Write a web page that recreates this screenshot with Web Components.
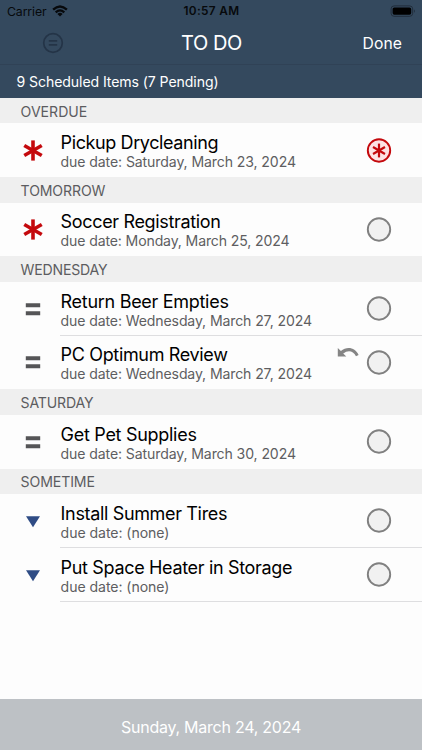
<!DOCTYPE html>
<html lang="en"><head><meta charset="utf-8"><title>To Do</title>
<style>html,body{margin:0;height:100%}body{font-family:Inter,"Liberation Sans",sans-serif;overflow:hidden}</style></head>
<body><todo-app></todo-app>
<script>
// A single line of text tracked to a given width.
class FitText extends HTMLElement{
  connectedCallback(){
    const r=this.attachShadow({mode:'open'});
    r.innerHTML='<style>:host{display:block;white-space:nowrap}span{display:inline-block}</style><span></span>';
    const s=r.querySelector('span'),t=this.getAttribute('text');s.textContent=t;
    const d=+this.getAttribute('width')-s.getBoundingClientRect().width;
    s.style.letterSpacing=(d/t.length).toFixed(4)+'px';
  }
}
customElements.define('fit-text',FitText);

const star=(r,w,c)=>`<g stroke="${c}" stroke-width="${w}"><path d="M0 ${-r}V${r}"/><path d="M0 ${-r}V${r}" transform="rotate(60)"/><path d="M0 ${-r}V${r}" transform="rotate(-60)"/></g>`;
const icons={
  high:star(10.1,3.6,'#c4090d'),
  normal:'<path d="M-7.2-6.3h14.4v4.1h-14.4zM-7.2 1.7h14.4v4.1h-14.4z" fill="#555557"/>',
  low:'<path d="M-7-5.3H7L0 5.8z" fill="#2f4c85"/>',
  open:'<circle r="11.2" fill="#f1f1f1" stroke="#808080" stroke-width="1.9"/>',
  alert:'<circle r="11.2" fill="#fde2e4" stroke="#c4090d" stroke-width="1.9"/>'+star(6.9,2.2,'#c4090d'),
  undo:'<path d="M-10.2-4.6V3.9H-1.7L-4.8 1.1C-.5-2.6 5-2.3 8 3.7L10.6 2.4C7.2-5.2-1.2-6.8-7.1-1.4z" fill="#858585"/>'
};
class TodoIcon extends HTMLElement{
  connectedCallback(){
    this.attachShadow({mode:'open'}).innerHTML=`<style>:host{display:block;width:28px;height:28px}svg{display:block}</style><svg width="28" height="28" viewBox="-14 -14.5 28 28">${icons[this.getAttribute('name')]}</svg>`;
  }
}
customElements.define('todo-icon',TodoIcon);

class StatusBar extends HTMLElement{
  connectedCallback(){
    this.attachShadow({mode:'open'}).innerHTML=`<style>
    :host{display:grid;grid-template-columns:1fr auto 1fr;height:22px;align-items:center;color:#07090c;padding:0 6px 0 7px;box-sizing:border-box}
    .l{display:flex;gap:5px;align-items:center;font-size:12.3px}.c{font-size:11.8px;font-weight:600}.r{justify-self:end}svg{display:block}.l svg{margin-top:-1px}</style>
    <div class="l"><fit-text text="Carrier" width="39.5"></fit-text>
    <svg width="16" height="12" viewBox="0 0 16 12"><g fill="none" stroke="#07090c" stroke-width="2.3"><path d="M1.1 4.7Q8-1.7 14.9 4.7M3.7 7.3Q8 3.4 12.3 7.3"/></g><path d="M5.4 8.9Q8 6.7 10.6 8.9L8 11.5z" fill="#07090c"/></svg></div>
    <fit-text class="c" text="10:57 AM" width="56"></fit-text>
    <svg class="r" width="26" height="13" viewBox="0 0 26 13"><rect x="1.1" y=".9" width="21.6" height="10.4" rx="3" fill="none" stroke="#212d3b"/><rect x="2.6" y="2.4" width="18.6" height="7.4" rx="1.7"/><path d="M24 4.3q1.5 1.8 0 3.6z" fill="#1a2430"/></svg>`;
  }
}
customElements.define('status-bar',StatusBar);

class NavBar extends HTMLElement{
  connectedCallback(){
    this.attachShadow({mode:'open'}).innerHTML=`<style>
    :host{display:grid;grid-template-columns:1fr auto 1fr;height:43px;align-items:center;color:#fff;padding:0 20px 0 42px;box-sizing:border-box;border-bottom:1px solid #304256}
    svg{display:block}.t{font-size:20px;margin-right:21px;padding-bottom:1px}.d{font-size:15.7px;justify-self:end;padding-top:1px}</style>
    <svg width="22" height="22" viewBox="-11 -11 22 22"><g fill="none" stroke="#243447" stroke-width="1.7"><circle r="9.3"/><path d="M-4.2-2.2h8.4M-4.2 1.9h8.4"/></g></svg>
    <fit-text class="t" text="TO DO" width="61"></fit-text>
    <fit-text class="d" text="Done" width="39.5"></fit-text>`;
  }
}
customElements.define('nav-bar',NavBar);

class TodoSection extends HTMLElement{
  connectedCallback(){
    this.attachShadow({mode:'open'}).innerHTML=`<style>
    :host{display:block}h2{margin:0;height:25.4px;padding:1px 0 0 20.6px;box-sizing:border-box;display:flex;align-items:center;background:#efefef;color:#5c5c60;font-weight:400;font-size:14.1px}</style>
    <h2><fit-text text="${this.getAttribute('label')}" width="${this.getAttribute('width')-.8}"></fit-text></h2><slot></slot>`;
  }
}
customElements.define('todo-section',TodoSection);

class TodoItem extends HTMLElement{
  connectedCallback(){
    const a=n=>this.getAttribute(n);
    this.attachShadow({mode:'open'}).innerHTML=`<style>
    :host{display:grid;grid-template-columns:60px 1fr auto;height:53.8px;box-sizing:border-box;color:#000}
    .icon{display:flex;align-items:center;padding-left:19px}
    .body,.end{border-bottom:1px solid ${this.hasAttribute('line')?'#dedee0':'transparent'}}
    .body{padding:7.9px 0 0 .6px}
    .title{font-size:18px;line-height:23px}.due{font-size:14.1px;line-height:16.6px;color:#5e5e61}
    .end{display:flex;align-items:center;padding-right:29px}.undo{margin:-19px 3px 0 0}</style>
    <div class="icon"><todo-icon name="${a('priority')}"></todo-icon></div>
    <div class="body"><fit-text class="title" text="${a('title-text')}" width="${a('tw')-1}"></fit-text><fit-text class="due" text="due date: ${a('due')}" width="${a('dw')-.7}"></fit-text></div>
    <div class="end">${this.hasAttribute('undo')?'<todo-icon class="undo" name="undo"></todo-icon>':''}<todo-icon name="${a('check')||'open'}"></todo-icon></div>`;
  }
}
customElements.define('todo-item',TodoItem);

class TodoApp extends HTMLElement{
  connectedCallback(){
    this.attachShadow({mode:'open'}).innerHTML=`<style>
    :host{display:flex;flex-direction:column;height:750px;width:422px;background:#fdfdfd}
    header{background:#34495e;height:98px}
    .sum{height:33px;display:flex;align-items:center;padding-left:16.5px;color:#fff;font-size:14.1px}
    main{flex:1}
    footer{height:51px;background:#bdc1c5;color:#fff;display:flex;justify-content:center;align-items:center;padding-top:5px;box-sizing:border-box;font-size:16px}</style>
    <header><status-bar></status-bar><nav-bar></nav-bar><div class="sum"><fit-text text="9 Scheduled Items (7 Pending)" width="202"></fit-text></div></header>
    <main>
    <todo-section label="OVERDUE" width="67.5"><todo-item priority="high" check="alert" title-text="Pickup Drycleaning" tw="158.5" due="Saturday, March 23, 2024" dw="236"></todo-item></todo-section>
    <todo-section label="TOMORROW" width="85.5"><todo-item priority="high" title-text="Soccer Registration" tw="161" due="Monday, March 25, 2024" dw="229.5"></todo-item></todo-section>
    <todo-section label="WEDNESDAY" width="87.5"><todo-item line priority="normal" title-text="Return Beer Empties" tw="169" due="Wednesday, March 27, 2024" dw="252"></todo-item><todo-item undo priority="normal" title-text="PC Optimum Review" tw="168" due="Wednesday, March 27, 2024" dw="252"></todo-item></todo-section>
    <todo-section label="SATURDAY" width="73.5"><todo-item priority="normal" title-text="Get Pet Supplies" tw="137" due="Saturday, March 30, 2024" dw="236"></todo-item></todo-section>
    <todo-section label="SOMETIME" width="75"><todo-item line priority="low" title-text="Install Summer Tires" tw="167.5" due="(none)" dw="109.5"></todo-item><todo-item line priority="low" title-text="Put Space Heater in Storage" tw="232.5" due="(none)" dw="109.5"></todo-item></todo-section>
    </main>
    <footer><fit-text text="Sunday, March 24, 2024" width="180"></fit-text></footer>`;
  }
}
customElements.define('todo-app',TodoApp);
</script></body></html>
